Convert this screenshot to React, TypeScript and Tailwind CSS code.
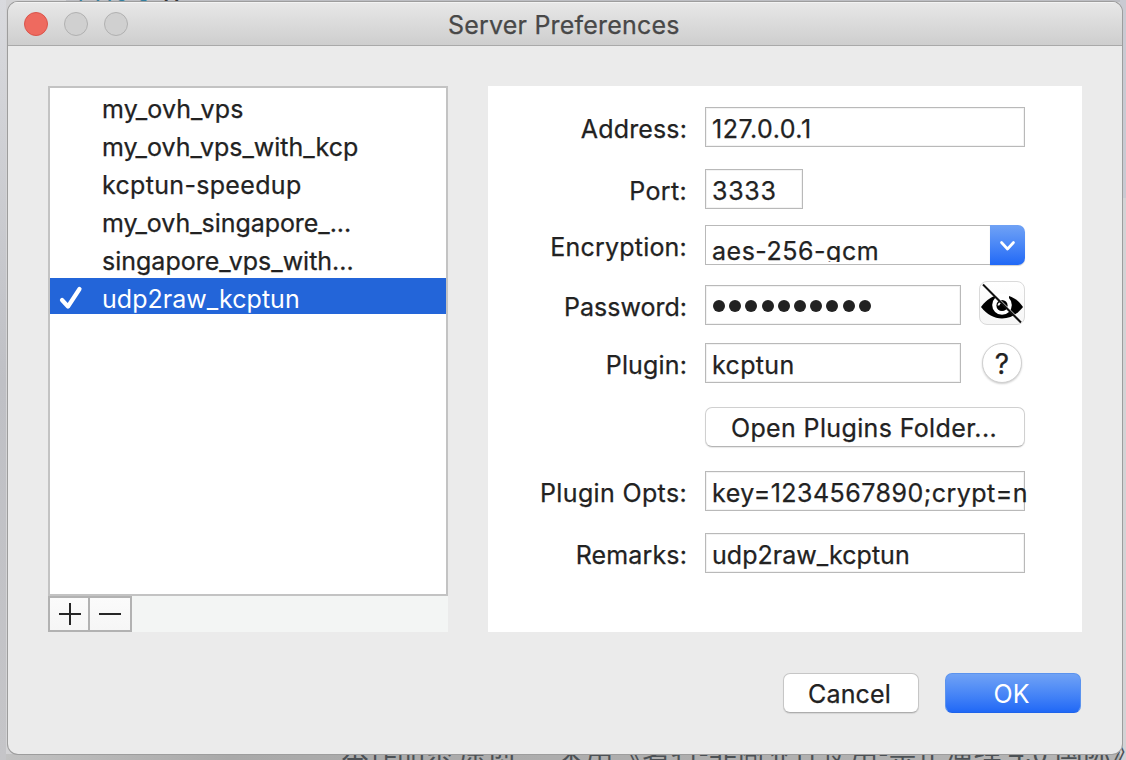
import React from "react";

const servers: { name: string; tracking: string }[] = [
  { name: "my_ovh_vps", tracking: "tracking-[0.1px]" },
  { name: "my_ovh_vps_with_kcp", tracking: "tracking-[0px]" },
  { name: "kcptun-speedup", tracking: "tracking-[0.32px]" },
  { name: "my_ovh_singapore_...", tracking: "tracking-[-0.05px]" },
  { name: "singapore_vps_with...", tracking: "tracking-[0px]" },
  { name: "udp2raw_kcptun", tracking: "tracking-[0.03px]" },
];

function Row({ label, className, labelClass = "", children }: {
  label?: string;
  className: string;
  labelClass?: string;
  children: React.ReactNode;
}) {
  return (
    <div className={`flex h-10 items-center ${className}`}>
      <div className={`mr-[18px] w-[199px] text-right whitespace-nowrap pt-1 ${labelClass}`}>{label}</div>
      {children}
    </div>
  );
}

function Field({ className, children }: { className: string; children: React.ReactNode }) {
  return (
    <div className={`flex h-10 shrink-0 items-center border border-[#b9b9b9] bg-white pt-1 pl-1.5 whitespace-nowrap shadow-[inset_0_0_0_1px_#f3f3f3] ${className}`}>
      {children}
    </div>
  );
}

function Backdrop() {
  return (
    <div className="absolute inset-0 overflow-hidden bg-[#d3d3d5]">
      <div className="absolute top-0 left-0 h-full w-1.5 bg-linear-to-b from-[#d9dade] via-[#bfc0c5] to-[#c5c5c8]" />
      <div className="absolute top-0 right-0 h-[198px] w-1.5 bg-[#c9cad2]" />
      <div className="absolute inset-x-1.5 bottom-0 h-1.5 bg-linear-to-r from-[#c2c2c2] via-[#a9a9a9] via-20% to-[#b4b4b4]" />
      <div className="absolute top-0 left-[66px] h-0.5 w-[1054px] bg-[#bdbec3]" />
      <div className="absolute top-[-17px] left-[78px] font-['Liberation_Mono'] text-[24px] leading-6 tracking-[4px] whitespace-pre text-[#347f9e]">
        /AJl<span className="ml-[12px] font-bold tracking-[-4px] text-[#333]">//</span>
      </div>
      <div className="absolute top-[736px] left-[341px] font-['Noto_Sans_CJK_SC',sans-serif] text-[28px] leading-[30px] whitespace-pre text-[#4c5155]">
        本作品系 原创<span className="ml-[42px] tracking-[0.3px]">采用《署名-非商业性使用-禁止演绎 4.0 国际》</span>
      </div>
    </div>
  );
}

function TitleBar() {
  return (
    <div className="relative flex h-11 items-center border-b border-[#a9a9a9] bg-linear-to-b from-[#e8e8e8] to-[#cecece] shadow-[inset_0_1px_0_#f3f3f3]">
      <div className="flex gap-4 pl-4">
        <div className="size-6 rounded-full border border-[#d9544b] bg-[#ee6a5f]" />
        <div className="size-6 rounded-full border border-[#b0b0b0] bg-[#d0d0d0]" />
        <div className="size-6 rounded-full border border-[#b0b0b0] bg-[#d0d0d0]" />
      </div>
      <div className="ml-[320px] pt-[3px] tracking-[0.2px] whitespace-nowrap text-[#484848] [-webkit-text-stroke:0.25px_#484848]">Server Preferences</div>
    </div>
  );
}

function ServerList() {
  return (
    <div className="h-[546px] w-[400px] bg-[#f3f5f4]">
      <div className="flex h-[510px] flex-col gap-0.5 border-2 border-[#c3c3c3] bg-white">
        {servers.map((s, i) => (
          <div key={s.name} className={`flex h-9 shrink-0 items-center ${i === 5 ? "bg-[#2365d9] text-white" : "[-webkit-text-stroke:0.25px_#222]"}`}>
            <div className="w-[52px] pl-[9px]">
              {i === 5 && (
                <svg className="mt-[5px]" width="26" height="26" viewBox="0 0 26 26" fill="none" stroke="white" strokeWidth="4.2" strokeLinecap="round" strokeLinejoin="round">
                  <path d="M3 14 9 20.5 20.5 3" />
                </svg>
              )}
            </div>
            <div className={`pt-[5px] whitespace-nowrap ${s.tracking}`}>{s.name}</div>
          </div>
        ))}
      </div>
      <div className="flex h-9 w-[84px] border-2 border-[#b2b2b2] bg-linear-to-b from-[#fbfbfb] to-[#f6f6f6]">
        <div className="w-10 border-r-2 border-[#b2b2b2]">
          <svg width="38" height="32" viewBox="0 0 38 32" stroke="#262626" strokeWidth="2">
            <path d="M9 16H31M20 5V27" />
          </svg>
        </div>
        <svg width="40" height="32" viewBox="0 0 40 32" stroke="#262626" strokeWidth="2">
          <path d="M9 16H31" />
        </svg>
      </div>
    </div>
  );
}

function EyeButton() {
  return (
    <div className="ml-[18px] h-[44px] w-[46px] shrink-0 -translate-y-[2px] rounded-[8px] border border-[#dadada] bg-linear-to-b from-white to-[#f6f6f6]">
      <svg width="44" height="42" viewBox="0 0 44 42">
        <path d="M1 25C5 19.5 9 16 15 14H29C35 16 39 19.5 43 25C37 32.5 30 36.5 22 36.5S7 32.5 1 25Z" fill="#000" />
        <circle cx="22" cy="23" r="9.8" fill="#fff" />
        <path d="M15 12H29V18H15Z" fill="#fff" />
        <circle cx="22" cy="23.5" r="5.6" fill="#000" />
        <path d="M18.4 23.5Q18.7 20.7 22 20.3" fill="none" stroke="#fff" strokeWidth="1.8" />
        <path d="M4.2 2.5 42.2 40.5" stroke="#fff" strokeWidth="1.6" />
        <path d="M3 2.5 41 40.5" stroke="#111" strokeWidth="2" />
      </svg>
    </div>
  );
}

function ServerForm() {
  return (
    <div className="h-[546px] w-[594px] bg-white pt-[21px] [-webkit-text-stroke:0.25px_#222]">
      <Row label="Address:" className="" labelClass="tracking-[0.14px]">
        <Field className="w-80 tracking-[0.5px]">127.0.0.1</Field>
      </Row>
      <Row label="Port:" className="mt-[22px]" labelClass="tracking-[0.35px]">
        <Field className="w-[98px] tracking-[0.7px]">3333</Field>
      </Row>
      <Row label="Encryption:" className="mt-4" labelClass="tracking-[0.2px]">
        <div className="flex h-10 w-80">
          <div className="h-10 w-[285px] overflow-hidden border border-r-0 border-[#b9b9b9]">
            <div className="h-9 overflow-hidden pt-[5px] pl-1.5 leading-[40px] tracking-[0.52px]">aes-256-gcm</div>
          </div>
          <div className="flex h-10 w-[35px] shrink-0 items-center justify-center rounded-r-[7px] bg-linear-to-b from-[#70a2f5] to-[#2068f6] shadow-[0_1px_1px_#00000030]">
            <svg width="18" height="12" viewBox="0 0 18 12" fill="none" stroke="white" strokeWidth="2.7" strokeLinecap="round" strokeLinejoin="round">
              <path d="M2.5 3.5 8.5 10 14.5 3.5" />
            </svg>
          </div>
        </div>
      </Row>
      <Row label="Password:" className="mt-5">
        <Field className="w-64">
          <div className="-mt-0.5 flex gap-[4.2px] pl-px">
            {Array.from({ length: 10 }, (_, i) => (
              <span key={i} className="size-3 rounded-full bg-[#222]" />
            ))}
          </div>
        </Field>
        <EyeButton />
      </Row>
      <Row label="Plugin:" className="mt-[18px]" labelClass="tracking-[0.15px]">
        <Field className="w-64 tracking-[0.35px]">kcptun</Field>
        <div className="ml-[21px] flex size-10 shrink-0 items-center justify-center rounded-full border border-[#d0d0d0] bg-white pt-0.5 text-[28px] shadow-[0_1px_2px_#00000030]">?</div>
      </Row>
      <Row className="mt-6">
        <div className="flex h-10 w-80 items-center justify-center rounded-[7px] border border-[#d0d0d0] border-b-[#b5b5b5] bg-white pt-0.5 pr-[2px] tracking-[0.36px] shadow-[0_1px_1px_#00000018]">Open Plugins Folder...</div>
      </Row>
      <Row label="Plugin Opts:" className="mt-6" labelClass="tracking-[0.35px]">
        <Field className="w-80 tracking-[0.47px]"><span>key=1234567890;crypt=n</span></Field>
      </Row>
      <Row label="Remarks:" className="mt-[22px]" labelClass="tracking-[0.15px]">
        <Field className="w-80 tracking-[0.03px]">udp2raw_kcptun</Field>
      </Row>
    </div>
  );
}

export default function App() {
  return (
    <div className="relative h-[760px] w-[1126px] overflow-hidden pt-0.5 pl-2 font-[Inter,sans-serif] text-[25px] leading-[30px] text-[#222]">
      <Backdrop />
      <div className="relative h-[752px] w-[1114px] overflow-hidden rounded-[10px] bg-[#ebebeb] shadow-[0_0_0_1px_#9d9d9d]">
        <TitleBar />
        <div className="flex gap-10 pt-10 pl-10">
          <ServerList />
          <ServerForm />
        </div>
        <div className="mt-[41px] flex gap-[26px] pl-[775px]">
          <div className="flex h-10 w-[136px] items-center justify-center rounded-[7px] border border-[#c6c6c6] border-b-[#adadad] bg-white pt-0.5 pr-[3px] tracking-[0.15px] shadow-[0_1px_1px_#00000018] [-webkit-text-stroke:0.25px_#222]">Cancel</div>
          <div className="flex h-10 w-[136px] items-center justify-center rounded-[7px] border border-[#5b93ee] border-b-[#1e63ea] bg-linear-to-b from-[#70a2f5] to-[#2068f6] pt-0.5 pr-[3px] text-white">OK</div>
        </div>
      </div>
    </div>
  );
}
